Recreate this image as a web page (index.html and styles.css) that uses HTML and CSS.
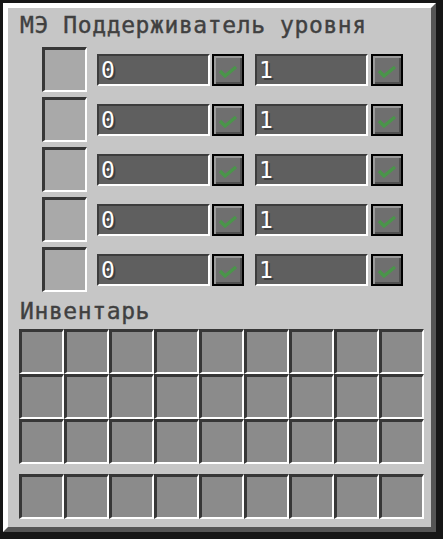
FILE: index.html
```html
<!DOCTYPE html>
<html lang="ru">
  <head>
    <meta charset="UTF-8" />
    <meta name="viewport" content="width=device-width, initial-scale=1.0" />
    <title>МЭ Поддерживатель уровня</title>
    <link rel="stylesheet" href="styles.css">
  </head>
  <body>
    <div class="panel">
      <div class="title">МЭ Поддерживатель уровня</div>

      <div class="rows">
        <div class="row">
          <div class="slot filter"></div>
          <div class="field">0</div>
          <div class="btn"><svg viewBox="0 0 28 28"><path d="M6 15 L11 20 L22 11" /></svg></div>
          <div class="field">1</div>
          <div class="btn"><svg viewBox="0 0 28 28"><path d="M6 15 L11 20 L22 11" /></svg></div>
        </div>
        <div class="row">
          <div class="slot filter"></div>
          <div class="field">0</div>
          <div class="btn"><svg viewBox="0 0 28 28"><path d="M6 15 L11 20 L22 11" /></svg></div>
          <div class="field">1</div>
          <div class="btn"><svg viewBox="0 0 28 28"><path d="M6 15 L11 20 L22 11" /></svg></div>
        </div>
        <div class="row">
          <div class="slot filter"></div>
          <div class="field">0</div>
          <div class="btn"><svg viewBox="0 0 28 28"><path d="M6 15 L11 20 L22 11" /></svg></div>
          <div class="field">1</div>
          <div class="btn"><svg viewBox="0 0 28 28"><path d="M6 15 L11 20 L22 11" /></svg></div>
        </div>
        <div class="row">
          <div class="slot filter"></div>
          <div class="field">0</div>
          <div class="btn"><svg viewBox="0 0 28 28"><path d="M6 15 L11 20 L22 11" /></svg></div>
          <div class="field">1</div>
          <div class="btn"><svg viewBox="0 0 28 28"><path d="M6 15 L11 20 L22 11" /></svg></div>
        </div>
        <div class="row">
          <div class="slot filter"></div>
          <div class="field">0</div>
          <div class="btn"><svg viewBox="0 0 28 28"><path d="M6 15 L11 20 L22 11" /></svg></div>
          <div class="field">1</div>
          <div class="btn"><svg viewBox="0 0 28 28"><path d="M6 15 L11 20 L22 11" /></svg></div>
        </div>
      </div>

      <div class="label">Инвентарь</div>

      <div class="grid">
        <div class="slot"></div><div class="slot"></div><div class="slot"></div>
        <div class="slot"></div><div class="slot"></div><div class="slot"></div>
        <div class="slot"></div><div class="slot"></div><div class="slot"></div>
        <div class="slot"></div><div class="slot"></div><div class="slot"></div>
        <div class="slot"></div><div class="slot"></div><div class="slot"></div>
        <div class="slot"></div><div class="slot"></div><div class="slot"></div>
        <div class="slot"></div><div class="slot"></div><div class="slot"></div>
        <div class="slot"></div><div class="slot"></div><div class="slot"></div>
        <div class="slot"></div><div class="slot"></div><div class="slot"></div>
      </div>

      <div class="grid hotbar">
        <div class="slot"></div><div class="slot"></div><div class="slot"></div>
        <div class="slot"></div><div class="slot"></div><div class="slot"></div>
        <div class="slot"></div><div class="slot"></div><div class="slot"></div>
      </div>
    </div>
  </body>
</html>
```

FILE: styles.css
```css
/* styles.css */
body {
  margin: 0;
  background-color: #161616;
  font-family: "DejaVu Sans Mono", monospace;
}

.panel {
  margin: 3px 0 0 3px;
  box-sizing: border-box;
  width: 433px;
  padding: 6px 0 8px 11px;
  background-color: #c6c6c6;
  border-top: 5px solid #fff;
  border-left: 5px solid #fff;
  border-right: 5px solid #555;
  border-bottom: 5px solid #555;
}

.title,
.label {
  font-size: 23px;
  line-height: 23px;
  letter-spacing: 0.6px;
  color: #404040;
  margin-left: 1px;
  -webkit-text-stroke: 0.4px #404040;
}

.rows {
  margin: 10px 0 0 23px;
  display: flex;
  flex-direction: column;
  gap: 5px;
}

.row {
  display: flex;
  align-items: center;
}

.slot {
  width: 45px;
  height: 45px;
  box-sizing: border-box;
  background-color: #8b8b8b;
  border-top: 3px solid #373737;
  border-left: 3px solid #373737;
  border-right: 2px solid #fff;
  border-bottom: 2px solid #fff;
}

.slot.filter {
  background-color: #a9a9a9;
  margin-right: 10px;
}

.field {
  width: 113px;
  height: 32px;
  box-sizing: border-box;
  background-color: #5f5f5f;
  border-top: 2px solid #3c3c3c;
  border-left: 2px solid #3c3c3c;
  border-right: 2px solid #fff;
  border-bottom: 2px solid #fff;
  padding-left: 2px;
  font-size: 23px;
  line-height: 28px;
  color: #fff;
  text-shadow: 2px 2px 0 #3f3f3f;
}

.btn {
  width: 32px;
  height: 32px;
  box-sizing: border-box;
  margin-left: 2px;
  margin-right: 11px;
  border: 2px solid #000;
  background-color: #6f6f6f;
  box-shadow: inset 2px 2px 0 #9a9a9a, inset -2px -2px 0 #505050;
}

.btn:last-child {
  margin-left: 3px;
  margin-right: 0;
}

.btn svg {
  display: block;
  width: 28px;
  height: 28px;
}

.btn path {
  fill: none;
  stroke: #4a954a;
  stroke-width: 3.5;
}

.label {
  margin-top: 8px;
}

.grid {
  margin-top: 6px;
  display: grid;
  grid-template-columns: repeat(9, 45px);
}

.grid.hotbar {
  margin-top: 10px;
}
```
